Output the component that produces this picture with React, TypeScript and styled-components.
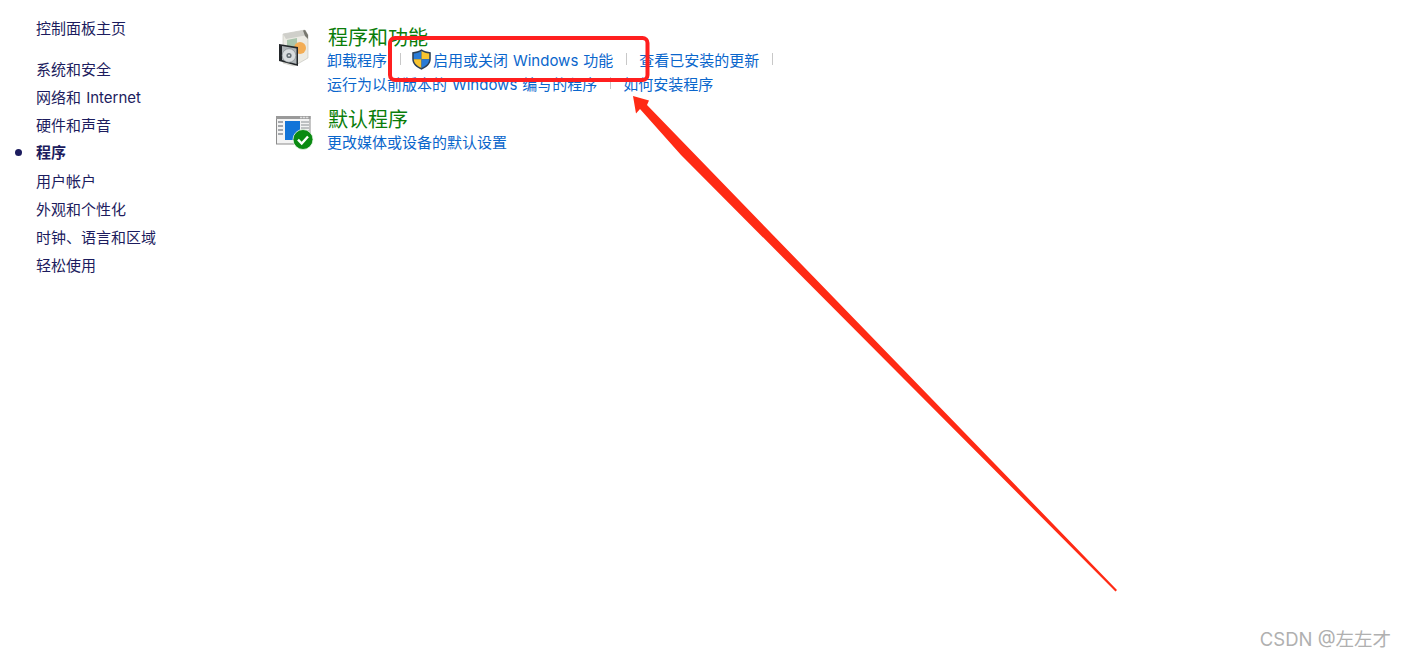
import React from "react";
import styled, { createGlobalStyle } from "styled-components";

const GlobalStyle = createGlobalStyle`
  html, body {
    margin: 0;
    padding: 0;
    background: #ffffff;
  }
  body {
    font-family: "Inter", "Noto Sans CJK SC", sans-serif;
  }
`;

const Page = styled.div`
  position: relative;
  display: flex;
  width: 1406px;
  height: 656px;
  overflow: hidden;
  background: #fff;
`;

const Sidebar = styled.nav`
  width: 276px;
  flex: none;
  padding: 15px 0 0 36px;
  box-sizing: border-box;
  word-spacing: 1px;
`;

const HomeLink = styled.a`
  display: block;
  height: 28px;
  line-height: 28px;
  margin-bottom: 13px;
  font-size: 15px;
  color: #1c1c5e;
`;

const NavItem = styled.a<{ $active?: boolean }>`
  position: relative;
  display: block;
  height: 28px;
  line-height: ${(p) => (p.$active ? 26 : 28)}px;
  font-size: 15px;
  color: #1c1c5e;
  font-weight: ${(p) => (p.$active ? 700 : 400)};

  ${(p) =>
    p.$active &&
    `
    &::before {
      content: "";
      position: absolute;
      left: -21px;
      top: 9px;
      width: 7px;
      height: 7px;
      border-radius: 50%;
      background: #1c1c5e;
    }
  `}
`;

const Content = styled.main`
  flex: 1;
  padding-top: 29px;
`;

const Section = styled.section`
  display: flex;
  align-items: flex-start;
  margin-bottom: 16px;
`;

const IconSlot = styled.div<{ $top?: number }>`
  width: 51px;
  flex: none;
  padding-top: ${(p) => p.$top ?? 0}px;
  line-height: 0;
`;

const Title = styled.h2`
  margin: 0 0 0 1px;
  height: 18px;
  line-height: 18px;
  font-size: 20px;
  font-weight: 400;
  color: #0a7d0a;
`;

const LinkRow = styled.div`
  display: flex;
  align-items: center;
  height: 24px;
`;

const TaskLink = styled.a`
  display: flex;
  align-items: center;
  font-size: 15px;
  word-spacing: 0.7px;
  color: #0a66cc;
  white-space: nowrap;
`;

const Separator = styled.span`
  width: 1px;
  height: 12px;
  margin: 0 12px 0 13px;
  background: #c8c8c8;
`;

const ShieldWrap = styled.span`
  display: inline-flex;
  margin: 0 2px 0 -1px;
`;

const Overlay = styled.svg`
  position: absolute;
  left: 0;
  top: 0;
  pointer-events: none;
`;

const Watermark = styled.div`
  position: absolute;
  right: 15px;
  bottom: 3px;
  font-size: 18.5px;
  line-height: 28px;
  color: #b0b0b0;
`;

const navItems = ["系统和安全", "网络和 Internet", "硬件和声音", "程序", "用户帐户", "外观和个性化", "时钟、语言和区域", "轻松使用"];

const ProgramsIcon = () => (
  <svg width="36" height="40" viewBox="2 -1 36 40">
    <path d="M9 4 L31 0 L34 5 L34 28 L20 36 L9 33 Z" fill="#ecebe4" stroke="#b4b4ae" strokeWidth="0.5" />
    <path d="M9 4 L31 0 L34 5 L12 9 Z" fill="#cfcfca" />
    <path d="M29 0.5 L31 0 L34 5 L34 9 L31 6 Z" fill="#77776f" />
    <path d="M13 10 L23 8 L23 18 L13 18 Z" fill="#a9c5ac" />
    <circle cx="26" cy="18" r="6" fill="#f3ad55" />
    <path d="M5 14 L24 17 L24 36 L5 31 Z" fill="#23272a" />
    <path d="M8 16 L22.5 18.5 L22.5 34 L8 30 Z" fill="#aeb4b7" />
    <circle cx="15" cy="25.5" r="6.8" fill="#d9dddf" stroke="#7f888c" strokeWidth="0.6" />
    <circle cx="15" cy="25.5" r="2.6" fill="#667076" />
    <circle cx="15" cy="25.5" r="1" fill="#e8eaeb" />
  </svg>
);

const DefaultsIcon = () => (
  <svg width="40" height="36" viewBox="0 0 40 36">
    <rect x="0.5" y="1.5" width="33.5" height="27.5" fill="#f3f3f3" stroke="#8c8c8c" />
    <rect x="0" y="1" width="34.5" height="3" fill="#9a9a9a" />
    <rect x="24" y="1.7" width="2.4" height="1.6" fill="#dcdcdc" />
    <rect x="27" y="1.7" width="2.4" height="1.6" fill="#dcdcdc" />
    <rect x="30" y="1.7" width="2.4" height="1.6" fill="#dcdcdc" />
    <rect x="9" y="6" width="15" height="19" fill="#1274d8" />
    <path d="M2 7h5M2 11h5M2 15h5M2 19h5" stroke="#8a8f94" strokeWidth="1.4" />
    <path d="M25 7h8M25 10h8M25 13h8M25 16h8" stroke="#8a8f94" strokeWidth="1.2" />
    <circle cx="27" cy="24.5" r="10" fill="#0a8a12" stroke="#e9f4e9" strokeWidth="0.8" />
    <path d="M22 24.7 L25.7 28.5 L32 21.5" fill="none" stroke="#ffffff" strokeWidth="2.4" />
  </svg>
);

const ShieldIcon = () => (
  <svg width="19" height="21" viewBox="1.4 0.8 17.2 18.8">
    <path d="M10 1 C7.5 2.6 5 3.4 1.6 3.6 L1.6 9.5 C1.6 14.4 5.4 17.4 10 19.4 C14.6 17.4 18.4 14.4 18.4 9.5 L18.4 3.6 C15 3.4 12.5 2.6 10 1 Z" fill="#2b3f55" />
    <path d="M10 2.4 C7.8 3.7 5.6 4.5 3 4.7 L3 10 L10 10 Z" fill="#2a7bd6" />
    <path d="M10 2.4 C12.2 3.7 14.4 4.5 17 4.7 L17 10 L10 10 Z" fill="#f9c42f" />
    <path d="M3 10 L10 10 L10 17.9 C6.2 16.2 3.2 14 3 10 Z" fill="#f9c42f" />
    <path d="M17 10 L10 10 L10 17.9 C13.8 16.2 16.8 14 17 10 Z" fill="#2a7bd6" />
  </svg>
);

export default function App() {
  return (
    <Page>
      <GlobalStyle />
      <Sidebar>
        <HomeLink>控制面板主页</HomeLink>
        {navItems.map((item) => (
          <NavItem key={item} $active={item === "程序"}>
            {item}
          </NavItem>
        ))}
      </Sidebar>
      <Content>
        <Section>
          <IconSlot>
            <ProgramsIcon />
          </IconSlot>
          <div>
            <Title>程序和功能</Title>
            <LinkRow>
              <TaskLink>卸载程序</TaskLink>
              <Separator />
              <TaskLink>
                <ShieldWrap>
                  <ShieldIcon />
                </ShieldWrap>
                启用或关闭 Windows 功能
              </TaskLink>
              <Separator />
              <TaskLink>查看已安装的更新</TaskLink>
              <Separator />
            </LinkRow>
            <LinkRow>
              <TaskLink>运行为以前版本的 Windows 编写的程序</TaskLink>
              <Separator />
              <TaskLink>如何安装程序</TaskLink>
            </LinkRow>
          </div>
        </Section>
        <Section>
          <IconSlot $top={4}>
            <DefaultsIcon />
          </IconSlot>
          <div>
            <Title>默认程序</Title>
            <LinkRow>
              <TaskLink>更改媒体或设备的默认设置</TaskLink>
            </LinkRow>
          </div>
        </Section>
      </Content>
      <Overlay width="1406" height="656" viewBox="0 0 1406 656">
        <rect x="390" y="38" width="257.5" height="42" rx="5" fill="none" stroke="#ff1f1f" strokeWidth="4" />
        <path d="M633 96 L649 100.5 L647 105 L1117 590 L1115.5 591.5 L681 155 L640 109 L636 113.5 Z" fill="#ff2a14" />
      </Overlay>
      <Watermark>CSDN @左左才</Watermark>
    </Page>
  );
}
